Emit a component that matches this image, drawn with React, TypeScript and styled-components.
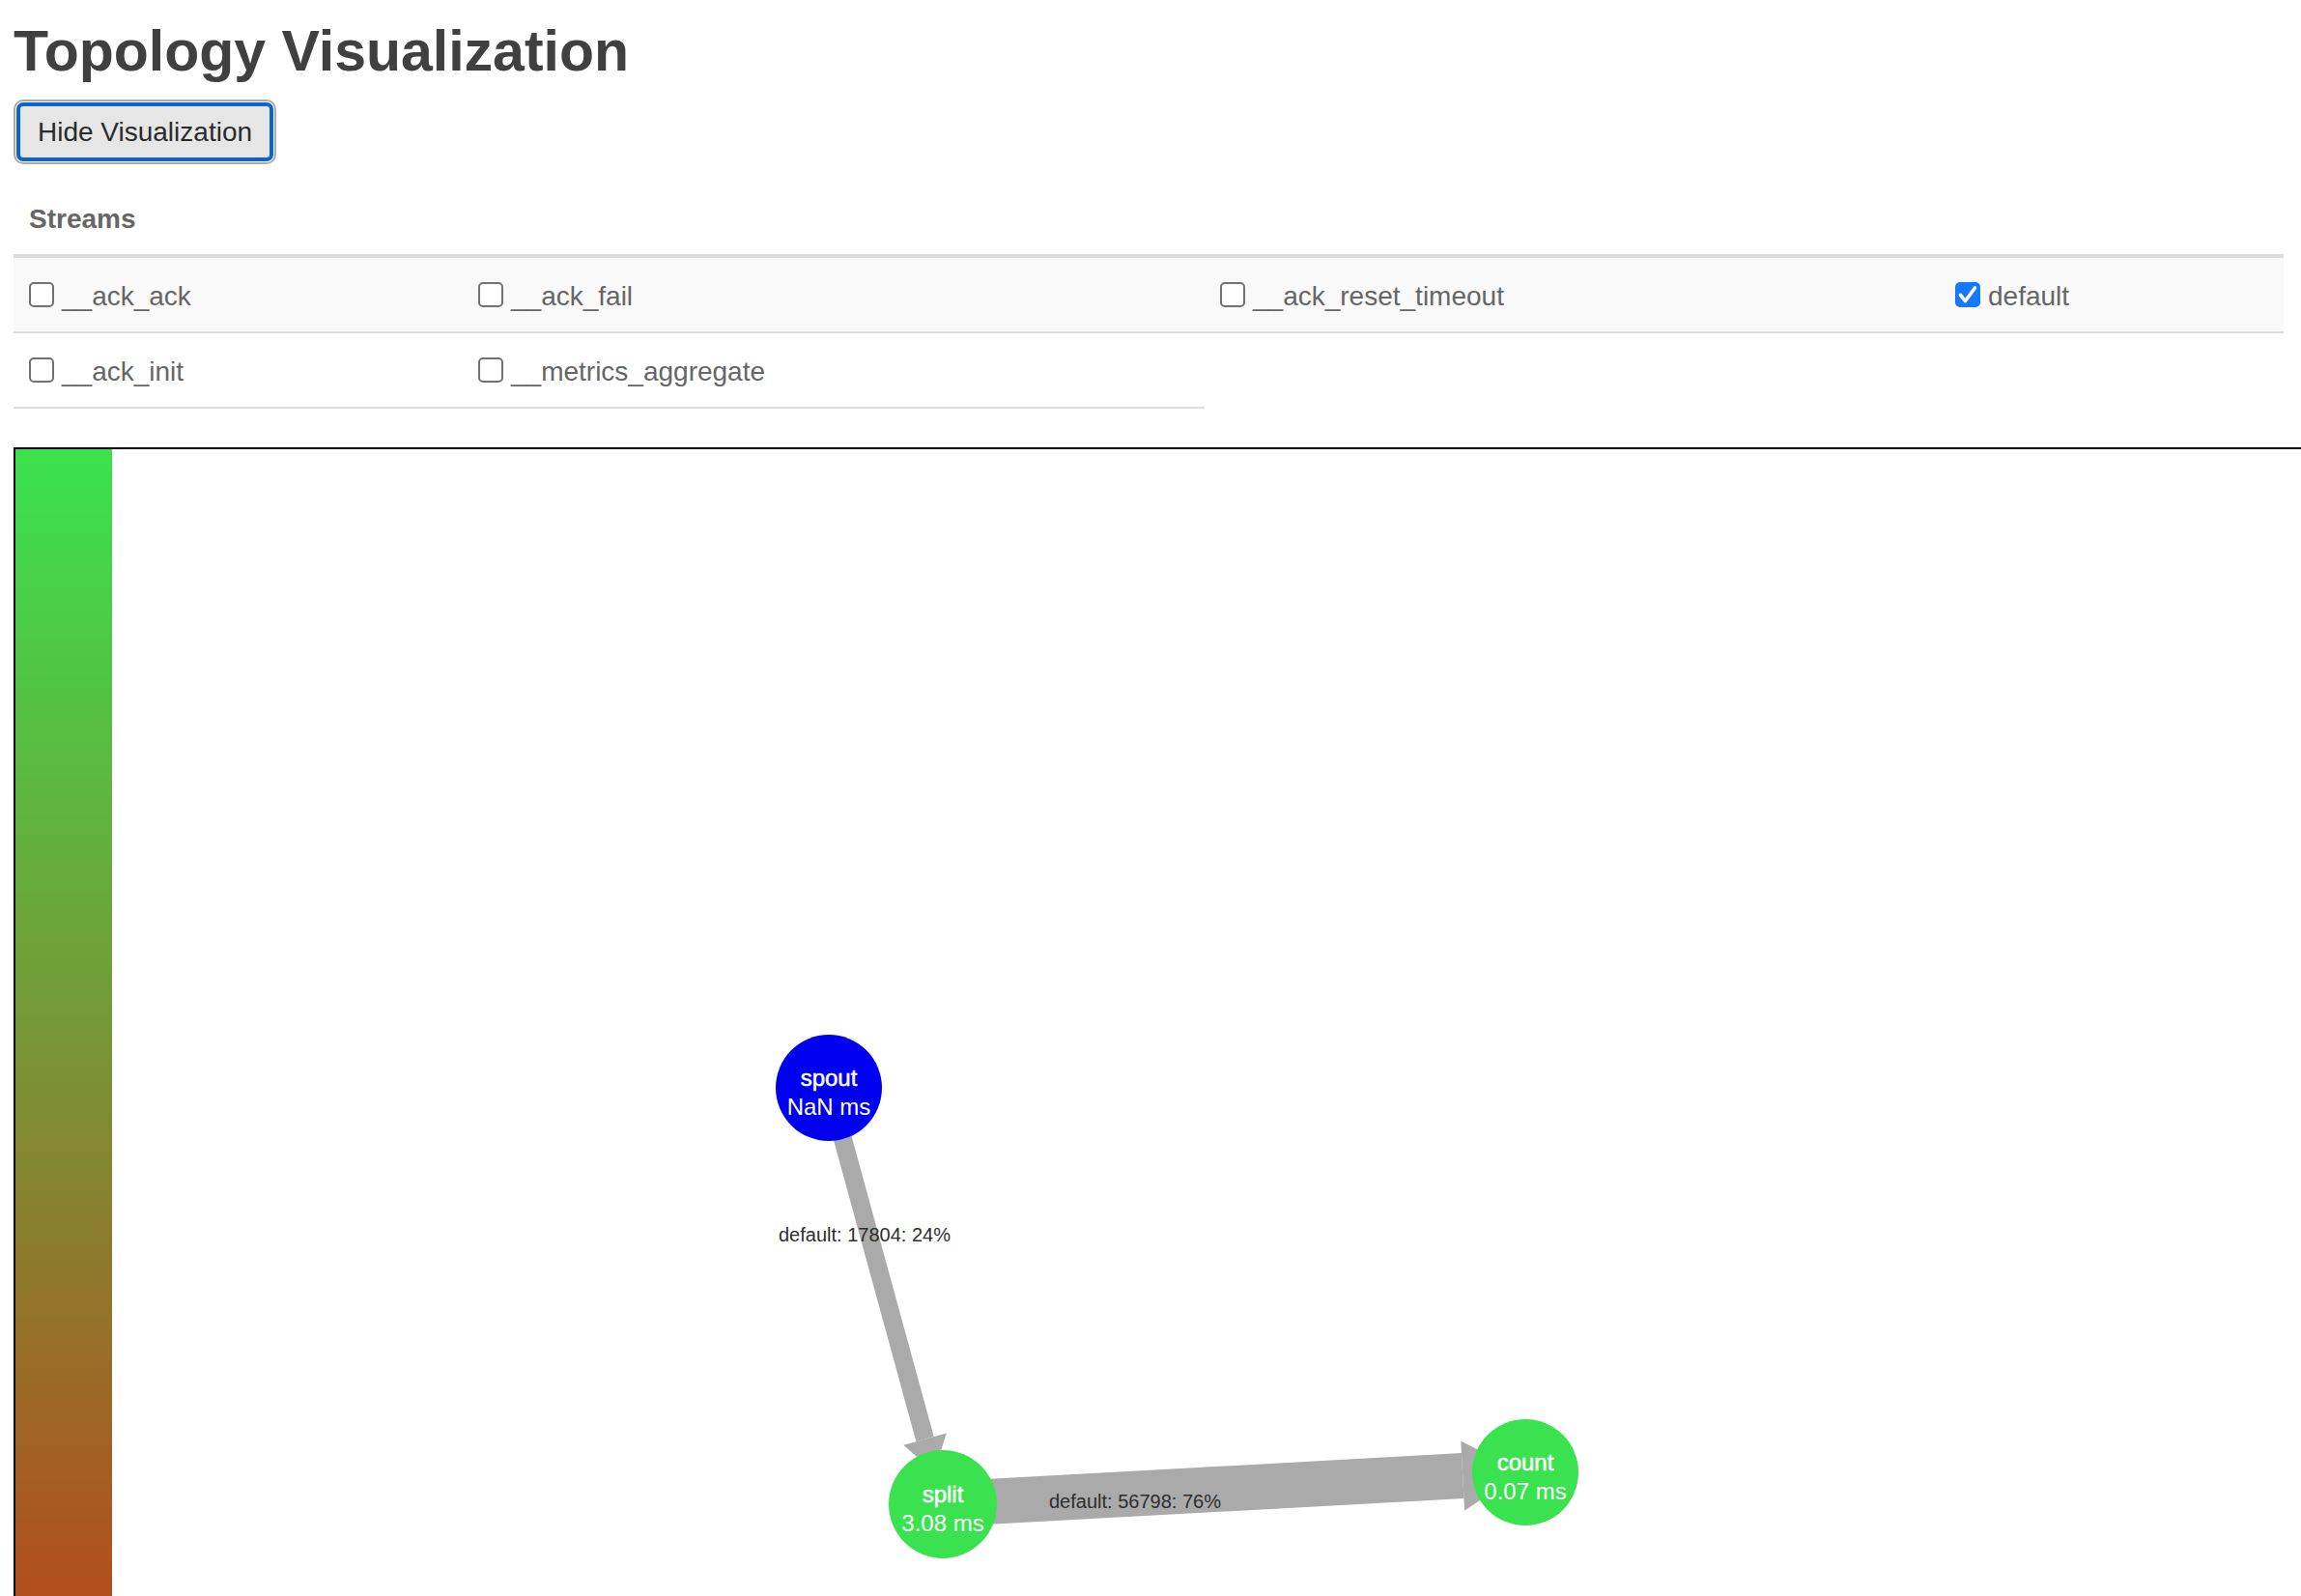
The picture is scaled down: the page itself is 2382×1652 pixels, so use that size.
import React from "react";
import styled, { createGlobalStyle } from "styled-components";

const GlobalStyle = createGlobalStyle`
  html, body {
    margin: 0;
    padding: 0;
    background: #ffffff;
    overflow: hidden;
  }
  body {
    font-family: "Liberation Sans", Arial, Helvetica, sans-serif;
  }
`;

const Page = styled.div`
  padding: 21px 0 0 14px;
`;

const Title = styled.h1`
  margin: 0;
  font-size: 59px;
  line-height: 64px;
  font-weight: 700;
  color: #404040;
`;

const ToggleButton = styled.button`
  display: block;
  box-sizing: border-box;
  width: 266px;
  height: 61px;
  margin: 21px 0 0 3px;
  padding: 11px 0 10px;
  border: 4px solid #0b63ce;
  border-radius: 7px;
  outline: 2px solid #ababab;
  outline-offset: 1px;
  background: #e6e6e6;
  color: #2b2b2b;
  font-family: "Liberation Sans", Arial, sans-serif;
  font-size: 28px;
  line-height: 32px;
  text-align: center;
`;

const StreamTable = styled.div`
  display: grid;
  grid-template-columns: 465px 768px 761px 356px;
  margin-top: 24px;
`;

const HeaderCell = styled.div`
  grid-column: 1 / -1;
  padding: 16px;
  font-size: 28px;
  line-height: 40px;
  font-weight: 700;
  color: #666666;
  border-bottom: 4px solid #dddddd;
`;

const Cell = styled.div<{ $striped: boolean }>`
  height: 76px;
  padding: 0 16px;
  display: flex;
  align-items: center;
  gap: 8px;
  background: ${(p) => (p.$striped ? "#f9f9f9" : "transparent")};
  border-bottom: 2px solid #dddddd;
`;

const Box = styled.span<{ $checked: boolean }>`
  box-sizing: border-box;
  width: 26px;
  height: 26px;
  flex: none;
  border-radius: 5px;
  border: ${(p) => (p.$checked ? "none" : "2px solid #717171")};
  background: ${(p) => (p.$checked ? "#1677ff" : "#ffffff")};
  display: flex;
  align-items: center;
  justify-content: center;
`;

const LabelText = styled.span`
  font-size: 28px;
  line-height: 40px;
  color: #666666;
  margin-top: 4px;
  white-space: nowrap;
`;

const GraphFrame = styled.div`
  margin-top: 40px;
  width: 2500px;
  height: 1300px;
  border: 2px solid #000000;
  display: flex;
  overflow: hidden;
`;

const Legend = styled.div`
  width: 100px;
  flex: none;
  background: linear-gradient(
    to bottom,
    rgb(58, 226, 78) 0px,
    rgb(177, 78, 30) 1187px,
    rgb(200, 50, 20) 1300px
  );
`;

const Canvas = styled.svg`
  display: block;
  flex: none;
`;

type Stream = { name: string; checked: boolean };

const rows: Stream[][] = [
  [
    { name: "__ack_ack", checked: false },
    { name: "__ack_fail", checked: false },
    { name: "__ack_reset_timeout", checked: false },
    { name: "default", checked: true },
  ],
  [
    { name: "__ack_init", checked: false },
    { name: "__metrics_aggregate", checked: false },
  ],
];

function CheckBox({ checked }: { checked: boolean }) {
  return (
    <Box $checked={checked}>
      {checked && (
        <svg width="26" height="26" viewBox="0 0 26 26">
          <path
            d="M5.5 13.5 L10.5 19.5 L20.5 6"
            fill="none"
            stroke="#ffffff"
            strokeWidth="3.6"
            strokeLinecap="round"
            strokeLinejoin="round"
          />
        </svg>
      )}
    </Box>
  );
}

type Pt = [number, number];

type Edge = {
  from: Pt;
  to: Pt;
  width: number;
  baseDist: number;
  headLen: number;
  halfW: number;
  label: string;
  labelAt: Pt;
};

const edges: Edge[] = [
  {
    from: [858, 1126],
    to: [976, 1557],
    width: 19,
    baseDist: 377,
    headLen: 36,
    halfW: 23,
    label: "default: 17804: 24%",
    labelAt: [806, 1285],
  },
  {
    from: [976, 1557],
    to: [1579, 1524],
    width: 47,
    baseDist: 539,
    headLen: 62,
    halfW: 36,
    label: "default: 56798: 76%",
    labelAt: [1086, 1561],
  },
];

type GraphNode = { name: string; latency: string; at: Pt; r: number; color: string };

const nodes: GraphNode[] = [
  { name: "spout", latency: "NaN ms", at: [858, 1126], r: 55, color: "#0000f0" },
  { name: "split", latency: "3.08 ms", at: [976, 1557], r: 56, color: "#3ae250" },
  { name: "count", latency: "0.07 ms", at: [1579, 1524], r: 55, color: "#3ae250" },
];

function edgeGeometry(e: Edge) {
  const dx = e.to[0] - e.from[0];
  const dy = e.to[1] - e.from[1];
  const len = Math.hypot(dx, dy);
  const ux = dx / len;
  const uy = dy / len;
  const nx = -uy;
  const ny = ux;
  const base: Pt = [e.from[0] + ux * e.baseDist, e.from[1] + uy * e.baseDist];
  const tip: Pt = [base[0] + ux * e.headLen, base[1] + uy * e.headLen];
  const w1: Pt = [base[0] + nx * e.halfW, base[1] + ny * e.halfW];
  const w2: Pt = [base[0] - nx * e.halfW, base[1] - ny * e.halfW];
  return { base, tip, w1, w2 };
}

function TopologyGraph() {
  return (
    <Canvas width="2400" height="1300">
      <g transform="translate(-116 -465)">
        {edges.map((e) => {
          const g = edgeGeometry(e);
          return (
            <g key={e.label}>
              <line
                x1={e.from[0]}
                y1={e.from[1]}
                x2={g.base[0]}
                y2={g.base[1]}
                stroke="#aaaaaa"
                strokeWidth={e.width}
              />
              <polygon
                points={`${g.w1[0]},${g.w1[1]} ${g.tip[0]},${g.tip[1]} ${g.w2[0]},${g.w2[1]}`}
                fill="#aaaaaa"
              />
              <text
                x={e.labelAt[0]}
                y={e.labelAt[1]}
                fontFamily="'Liberation Sans', Arial, sans-serif"
                fontSize="20"
                fill="#2e2e2e"
              >
                {e.label}
              </text>
            </g>
          );
        })}
        {nodes.map((n) => (
          <g key={n.name}>
            <circle cx={n.at[0]} cy={n.at[1]} r={n.r} fill={n.color} />
            <text
              x={n.at[0]}
              y={n.at[1] - 2}
              textAnchor="middle"
              fontFamily="'Liberation Sans', Arial, sans-serif"
              fontSize="24"
              fill="#ffffff"
              stroke="#ffffff"
              strokeWidth="0.5"
            >
              {n.name}
            </text>
            <text
              x={n.at[0]}
              y={n.at[1] + 28}
              textAnchor="middle"
              fontFamily="'Liberation Sans', Arial, sans-serif"
              fontSize="24"
              fill="#ffffff"
            >
              {n.latency}
            </text>
          </g>
        ))}
      </g>
    </Canvas>
  );
}

export default function App() {
  return (
    <>
      <GlobalStyle />
      <Page>
        <Title>Topology Visualization</Title>
        <ToggleButton type="button">Hide Visualization</ToggleButton>
        <StreamTable>
          <HeaderCell>Streams</HeaderCell>
          {rows.map((row, ri) =>
            row.map((s) => (
              <Cell key={s.name} $striped={ri % 2 === 0}>
                <CheckBox checked={s.checked} />
                <LabelText>{s.name}</LabelText>
              </Cell>
            ))
          )}
        </StreamTable>
        <GraphFrame>
          <Legend />
          <TopologyGraph />
        </GraphFrame>
      </Page>
    </>
  );
}
